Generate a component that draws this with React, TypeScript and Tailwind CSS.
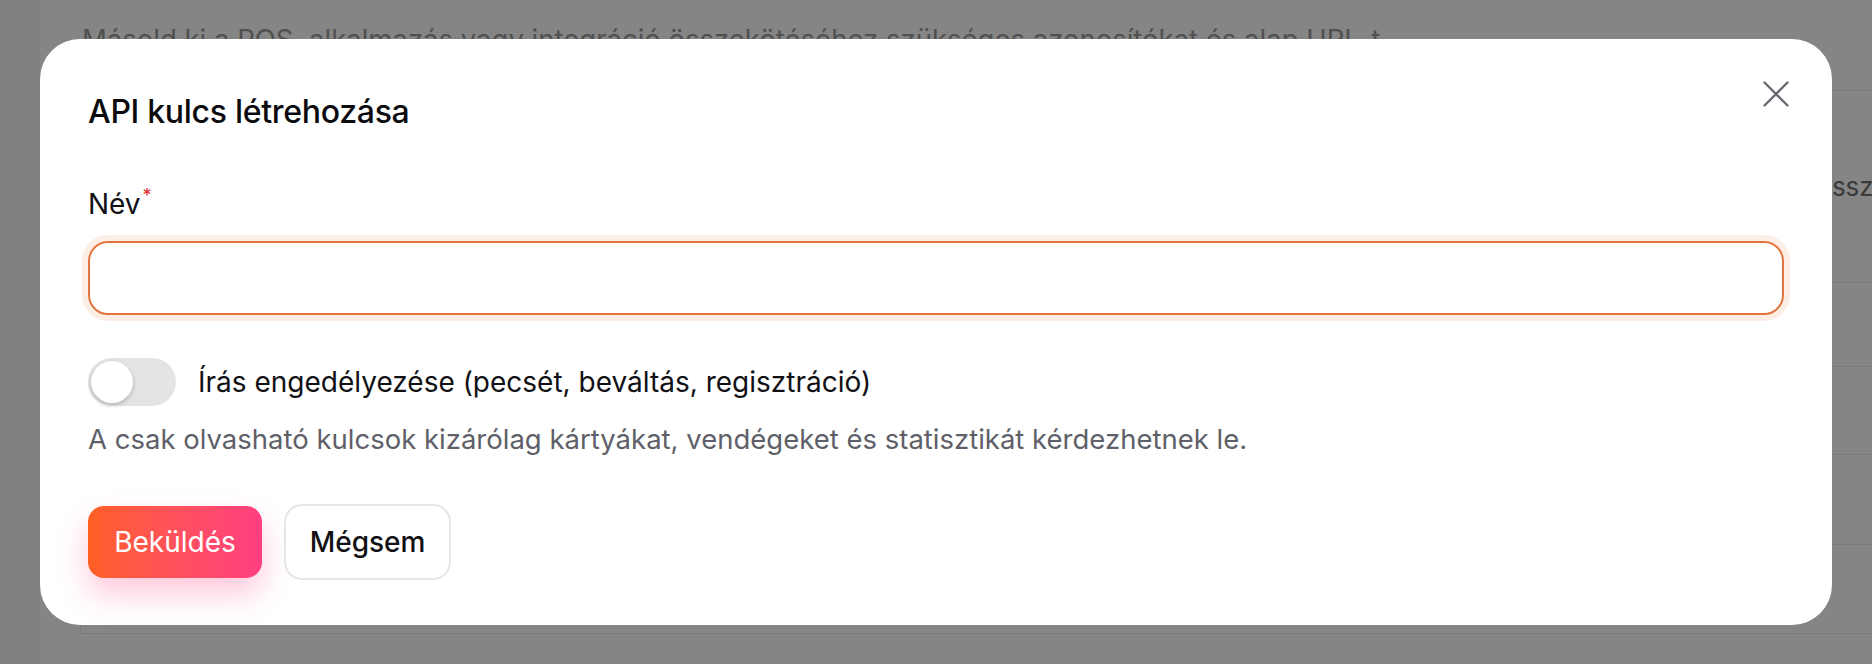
import { useState } from "react";

const rows = [84, 88, 90, 89];

const Backdrop = () => {
    return (
        <div className="flex h-full w-full bg-white font-['Inter',sans-serif]">
            <div className="w-[40px] shrink-0 bg-[#f4f4f4]" />
            <div className="flex-1 min-w-0">
                <p className="pt-[21px] pl-[42px] text-[27.5px] leading-[36px] text-[#9a9a9a] whitespace-nowrap">
                    Másold ki a POS, alkalmazás vagy integráció összekötéséhez szükséges azonosítókat és alap URL-t.
                </p>
                <div className="mt-[33px] ml-[40px] border-l border-t border-[#eaeaea]">
                    <div className="flex h-[192px] items-center border-b border-[#eaeaea]">
                        <div className="flex-1" />
                        <div className="w-[60px] shrink-0 overflow-hidden whitespace-nowrap text-[26px] text-[#707070]">Összesítés</div>
                    </div>
                    {rows.map((h, i) => (
                        <div key={i} className="border-b border-[#eaeaea]" style={{ height: h }} />
                    ))}
                </div>
            </div>
        </div>
    );
};

const App = () => {
    const [canWrite, setCanWrite] = useState(false);

    return (
        <div className="relative h-[664px] w-full overflow-hidden font-['Inter',sans-serif]">
            <Backdrop />

            {/* Overlay + dialog */}
            <div className="absolute inset-0 flex items-center justify-center bg-black/[0.478] px-10">
                <div className="relative w-full rounded-[40px] bg-white px-12 pt-12 pb-[45px]">
                    <button type="button" className="absolute top-[42px] right-[43px] text-[#6b6b73]">
                        <svg width="26" height="26" viewBox="0 0 26 26" fill="none" stroke="currentColor" strokeWidth="2.4" strokeLinecap="round">
                            <path d="M1.5 1.5 24.5 24.5" />
                            <path d="M24.5 1.5 1.5 24.5" />
                        </svg>
                    </button>

                    <h2 className="text-[32px] leading-[50px] font-medium tracking-[-0.3px] text-[#0b0b0f]">
                        API kulcs létrehozása
                    </h2>

                    <label className="mt-[47px] block text-[28px] leading-[40px] text-[#111115]">
                        Név
                        <span className="relative -top-[12px] ml-[2px] text-[18px] text-[#e5262b]">*</span>
                    </label>
                    <input
                        type="text"
                        className="mt-[13px] block h-[74px] w-full rounded-[20px] border-2 border-[#e4743d] px-5 text-[26px] outline-none ring-[6px] ring-[#fdeee5]"
                    />

                    <div className="mt-[43px] flex items-center gap-[22px]">
                        <button
                            type="button"
                            onClick={() => setCanWrite(!canWrite)}
                            className={`flex h-[48px] w-[88px] shrink-0 items-center rounded-full p-[3px] ${canWrite ? "bg-[#ff5f1f] justify-end" : "bg-[#e4e4e7] justify-start"}`}
                        >
                            <span className="size-[42px] rounded-full bg-white shadow-[0_2px_5px_rgba(0,0,0,0.22)]" />
                        </button>
                        <span className="text-[28px] leading-[40px] text-[#111115]">
                            Írás engedélyezése (pecsét, beváltás, regisztráció)
                        </span>
                    </div>
                    <p className="mt-[15px] text-[27.5px] leading-[36px] text-[#5f5f69]">
                        A csak olvasható kulcsok kizárólag kártyákat, vendégeket és statisztikát kérdezhetnek le.
                    </p>

                    <div className="mt-[47px] flex items-center gap-[22px]">
                        <button
                            type="submit"
                            className="h-[72px] w-[174px] rounded-[16px] bg-linear-to-r from-[#ff5f1f] to-[#ff3e80] text-[28px] text-white shadow-[0_16px_30px_rgba(255,62,128,0.28)]"
                        >
                            Beküldés
                        </button>
                        <button
                            type="button"
                            className="h-[76px] w-[167px] rounded-[18px] border-2 border-[#e6e6e6] bg-white text-[28px] font-medium text-[#111115]"
                        >
                            Mégsem
                        </button>
                    </div>
                </div>
            </div>
        </div>
    );
};

export default App;
